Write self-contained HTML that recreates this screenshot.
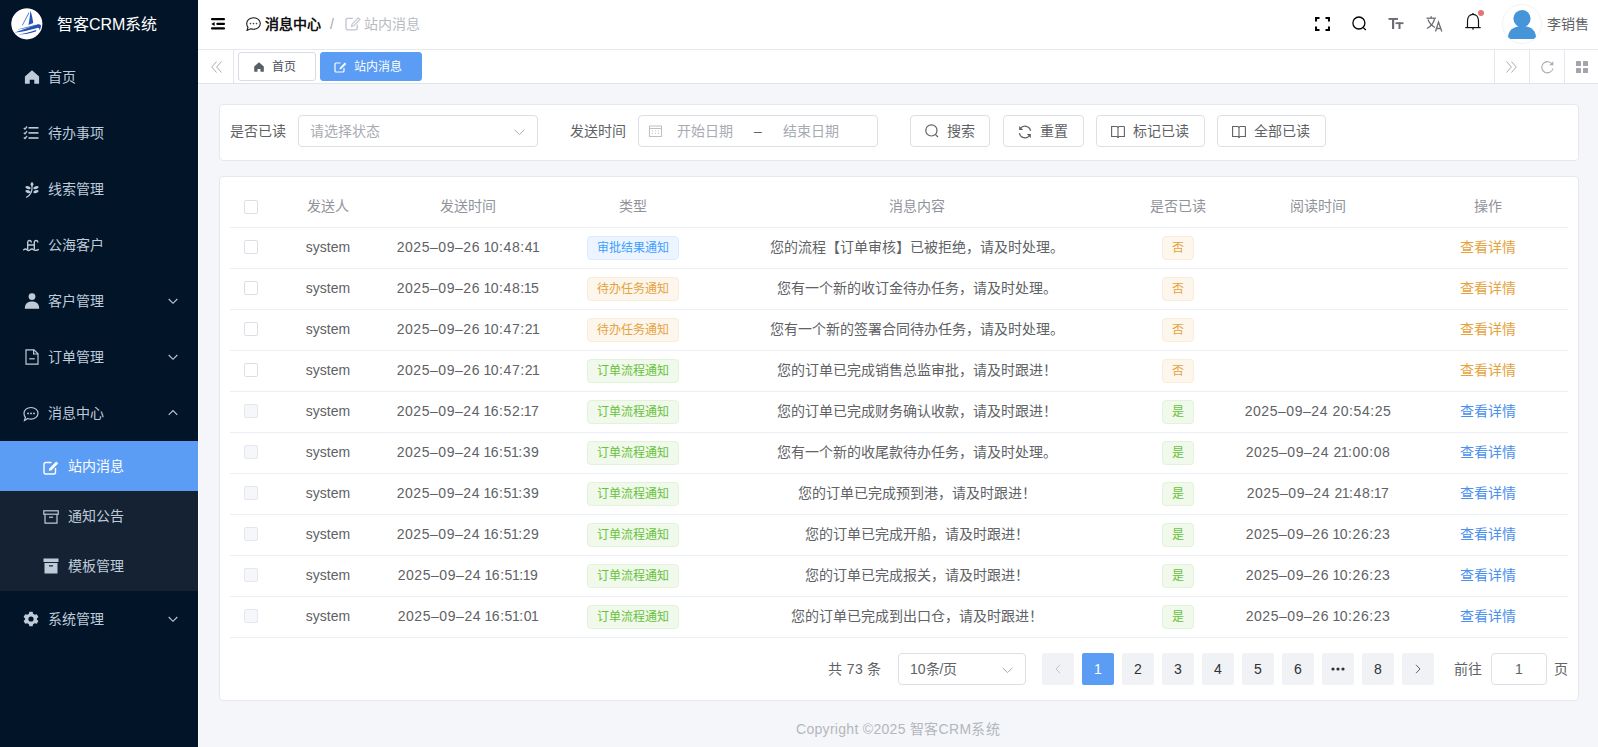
<!DOCTYPE html>
<html lang="zh-CN"><head><meta charset="utf-8">
<style>
*{box-sizing:border-box;margin:0;padding:0}
html,body{width:1598px;height:747px;overflow:hidden}
body{font-family:"Liberation Sans",sans-serif;font-size:14px;color:#606266;background:#f4f6f9;position:relative}
.abs{position:absolute}
svg{display:block}
/* sidebar */
#side{position:absolute;left:0;top:0;width:198px;height:747px;background:#011428}
.logo{position:absolute;left:11px;top:8px;width:32px;height:32px;border-radius:50%;overflow:hidden}
.logotxt{position:absolute;left:57px;top:14px;font-size:16px;font-weight:500;color:#fff;white-space:nowrap;line-height:22px}
.mi{position:absolute;left:0;width:198px;height:56px;color:#bfcbd9;font-size:14px}
.mi .ic{position:absolute;left:23px;top:20px;width:16px;height:16px}
.mi .tx{position:absolute;left:48px;top:0;line-height:56px}
.mi .ar{position:absolute;left:168px;top:24px;width:10px;height:7px}
.sub{position:absolute;left:0;top:441px;width:198px;height:150px;background:#152233}
.si{position:absolute;left:0;width:198px;height:50px;color:#bfcbd9}
.si .ic{position:absolute;left:43px;top:17px;width:16px;height:16px}
.si .tx{position:absolute;left:68px;top:0;line-height:50px}
.si.act{background:#5b9cf4;color:#fff}
/* header */
#hdr{position:absolute;left:198px;top:0;width:1400px;height:50px;background:#fff;border-bottom:1px solid #e6e8ee}
#tags{position:absolute;left:198px;top:50px;width:1400px;height:34px;background:#fff;border-bottom:1px solid #dfe3ea}
.tag{position:absolute;top:2px;height:29px;border:1px solid #d8dce5;border-radius:3px;font-size:12px;line-height:28px;color:#495060;background:#fff}
.tag.act{background:#5b9cf4;border-color:#5b9cf4;color:#fff}
/* cards */
.card{position:absolute;background:#fff;border:1px solid #e5e8ef;border-radius:4px}
.lbl{position:absolute;color:#606266;line-height:32px;font-weight:500}
.inp{position:absolute;height:32px;border:1px solid #dcdfe6;border-radius:4px;background:#fff;color:#a8abb2;line-height:30px}
.btn{position:absolute;top:10px;height:32px;border:1px solid #dcdfe6;border-radius:4px;background:#fff;color:#606266;line-height:30px;font-weight:500}
.btn .ic{position:absolute;left:13px;top:8px;width:14px;height:14px}
.btn .tx{position:absolute;top:0}
/* table */
.row{position:absolute;left:10px;width:1338px;height:41px;border-bottom:1px solid #ebeef5}
.c{position:absolute;top:-1px;text-align:center;white-space:nowrap;line-height:40px}
.hd .c{color:#909399;font-weight:500}
.cb{position:absolute;left:14px;width:14px;height:14px;border:1px solid #dcdfe6;border-radius:2px;background:#fff}
.num{letter-spacing:0.55px}
.n1{font-style:normal;margin-left:-1px;letter-spacing:-0.5px}
.tg{display:inline-block;height:24px;line-height:22px;padding:0 9px;font-size:12px;border:1px solid;border-radius:4px;vertical-align:middle}
.tg.b{background:#ecf5ff;border-color:#d9ecff;color:#409eff}
.tg.o{background:#fdf6ec;border-color:#faecd8;color:#e6a23c}
.tg.g{background:#f0f9eb;border-color:#e1f3d8;color:#67c23a}
.lk{font-weight:500}
.lk.o{color:#e6a23c}
.lk.b{color:#4a90ee}
.pg{position:absolute;top:476px;width:32px;height:32px;border-radius:2px;background:#f0f2f5;color:#303133;text-align:center;line-height:32px;font-weight:500}
.pg.act{background:#5b9cf5;color:#fff}
</style></head><body>

<div id="side">
  <div class="logo"><svg width="32" height="32" viewBox="0 0 32 32"><circle cx="15.8" cy="15.8" r="15.6" fill="#fff"/>
  <path d="M17.6 4.5 L18.3 5 L11.8 17.2 L10.8 17.4 Z" fill="#3a72d4"/>
  <path d="M19.4 2.6 C20.6 6 21.8 11 22.2 15 L17.4 17 C18.6 12 19 7 19.4 2.6Z" fill="#2454b8"/>
  <path d="M3.6 24.4 C10 22.5 18 19.5 26 16.5 C28.5 15.6 30 16.5 30 18 C29.8 19.8 29.2 21.2 28.7 22.4 C28.5 20.5 27.8 19.6 26.2 19.9 C18.5 22 10 24.2 3.6 24.4Z" fill="#2452b4"/>
  <path d="M7 21.2 C13 19.8 19 18.3 25 16.8 L25.2 17.6 C19 19.2 13 20.8 7 21.6Z" fill="#2f63c4"/>
  <path d="M7.2 26.6 C13 25.6 19 24 25 22 C25.5 22.6 25.3 23.2 24.6 23.5 C19 25.3 12.5 26.8 7.2 26.6Z" fill="#2350b0"/></svg></div>
  <div class="logotxt">智客CRM系统</div>

  <div class="mi" style="top:49px"><svg class="ic" style="left:24px;top:20px" width="14" height="14" viewBox="0 0 14 14"><path d="M7 1 L13.2 6.5 V13 H9 V9.5 H5 V13 H0.8 V6.5 Z" fill="#bfcbd9"/></svg><span class="tx">首页</span></div>

  <div class="mi" style="top:105px"><svg class="ic" style="left:23px;top:20px" width="16" height="15" viewBox="0 0 16 15"><g stroke="#bfcbd9" fill="none" stroke-width="1.3"><path d="M0.8 2.5 L2 3.6 L4 1"/><path d="M0.8 7.2 L2 8.3 L4 5.7"/><path d="M0.8 12 L2 13.1 L4 10.5"/></g><g fill="#bfcbd9"><rect x="5.5" y="1.5" width="10" height="1.6"/><rect x="5.5" y="6.6" width="10" height="1.6"/><rect x="5.5" y="11.7" width="10" height="1.6"/></g></svg><span class="tx">待办事项</span></div>

  <div class="mi" style="top:161px"><svg class="ic" style="left:24px;top:21px" width="14" height="15" viewBox="0 0 14 15"><g fill="#bfcbd9"><ellipse cx="7" cy="2.2" rx="1.3" ry="2"/><ellipse cx="3.3" cy="5.3" rx="2.6" ry="1.3" transform="rotate(20 3.3 5.3)"/><ellipse cx="10.7" cy="5.3" rx="2.6" ry="1.3" transform="rotate(-20 10.7 5.3)"/><ellipse cx="3.3" cy="9" rx="2.6" ry="1.3" transform="rotate(20 3.3 9)"/><ellipse cx="10.7" cy="9" rx="2.6" ry="1.3" transform="rotate(-20 10.7 9)"/></g><path d="M7 3.5 C7.5 8 6.5 12 1.5 14.5" stroke="#bfcbd9" stroke-width="1.1" fill="none"/></svg><span class="tx">线索管理</span></div>

  <div class="mi" style="top:217px"><svg class="ic" style="left:23px;top:20px" width="16" height="12" viewBox="0 0 16 12"><g stroke="#bfcbd9" fill="none" stroke-width="1.4" stroke-linecap="round"><path d="M4.7 10 V3.2 C4.7 1 8 1 8.3 3"/><path d="M11.3 10 V3.2 C11.3 1 14.6 1 14.9 3"/><path d="M4.7 6 H11.3"/><path d="M0.7 10.8 C2 9.8 3 9.8 4 10.8 C5 11.8 6 11.8 7.2 10.8 C8.4 9.8 9.4 9.8 10.6 10.8 C11.8 11.8 12.8 11.8 15.3 10.6"/></g></svg><span class="tx">公海客户</span></div>

  <div class="mi" style="top:273px"><svg class="ic" style="left:24px;top:20px" width="15" height="16" viewBox="0 0 15 16"><g fill="#bfcbd9"><circle cx="7.5" cy="3.6" r="3.4"/><path d="M0.3 15.8 C0.3 11 3 8.6 7.5 8.6 C12 8.6 14.7 11 14.7 15.8 Z"/></g></svg><span class="tx">客户管理</span><svg class="ar" style="top:25px" width="10" height="7" viewBox="0 0 10 7"><path d="M0.7 1 L5 5.3 L9.3 1" stroke="#bfcbd9" stroke-width="1.1" fill="none"/></svg></div>

  <div class="mi" style="top:329px"><svg class="ic" style="left:24px;top:20px" width="14" height="16" viewBox="0 0 14 16"><g stroke="#bfcbd9" fill="none" stroke-width="1.2"><path d="M1 0.8 H9 L13 4.8 V15.2 H1 Z"/><path d="M8.6 0.8 V5 H13"/><path d="M4.2 9.8 H9.8"/></g></svg><span class="tx">订单管理</span><svg class="ar" style="top:25px" width="10" height="7" viewBox="0 0 10 7"><path d="M0.7 1 L5 5.3 L9.3 1" stroke="#bfcbd9" stroke-width="1.1" fill="none"/></svg></div>

  <div class="mi" style="top:385px"><svg class="ic" style="left:23px;top:21px" width="16" height="15" viewBox="0 0 16 15"><path d="M8 1 C12 1 15 3.5 15 6.8 C15 10 12 12.6 8 12.6 C6.8 12.6 5.8 12.4 4.8 12 L1.5 14 L2.4 10.8 C1.5 9.7 1 8.3 1 6.8 C1 3.5 4 1 8 1Z" stroke="#bfcbd9" stroke-width="1.2" fill="none"/><g fill="#bfcbd9"><circle cx="5" cy="6.9" r="0.95"/><circle cx="8" cy="6.9" r="0.95"/><circle cx="11" cy="6.9" r="0.95"/></g></svg><span class="tx">消息中心</span><svg class="ar" style="top:24px" width="10" height="7" viewBox="0 0 10 7"><path d="M0.7 5.8 L5 1.5 L9.3 5.8" stroke="#bfcbd9" stroke-width="1.1" fill="none"/></svg></div>

  <div class="sub">
    <div class="si act" style="top:0"><svg class="ic" style="left:43px;top:19px" width="16" height="14" viewBox="0 0 16 14"><path d="M8.5 1.5 H2.5 C1.6 1.5 1 2.1 1 3 V11.5 C1 12.4 1.6 13 2.5 13 H11 C11.9 13 12.5 12.4 12.5 11.5 V7" stroke="#fff" stroke-width="1.4" fill="none"/><path d="M13.2 0.6 L15.2 2.6 L8.5 9.3 L5.8 10 L6.5 7.3 Z" fill="#fff"/></svg><span class="tx">站内消息</span></div>
    <div class="si" style="top:50px"><svg class="ic" style="left:43px;top:18px" width="16" height="14" viewBox="0 0 16 14"><g stroke="#bfcbd9" fill="none" stroke-width="1.2"><rect x="0.8" y="0.8" width="14.4" height="3.4"/><path d="M2 4.2 V13.2 H14 V4.2"/><path d="M6 7.2 H10"/></g></svg><span class="tx">通知公告</span></div>
    <div class="si" style="top:100px"><svg class="ic" style="left:43px;top:17px" width="16" height="16" viewBox="0 0 16 16"><g fill="#bfcbd9"><rect x="0.5" y="0.5" width="15" height="3.5"/><path d="M1.5 5 H14.5 V15.5 H1.5 Z M6 7.3 V8.5 H10 V7.3 Z" fill-rule="evenodd"/></g></svg><span class="tx">模板管理</span></div>
  </div>

  <div class="mi" style="top:591px"><svg class="ic" style="left:23px;top:20px" width="16" height="15" viewBox="0 0 16 15"><path fill="#bfcbd9" fill-rule="evenodd" d="M6.4 0.3 H9.6 L10.1 2.3 L11.8 3.3 L13.8 2.7 L15.4 5.4 L13.9 6.9 V8.1 L15.4 9.6 L13.8 12.3 L11.8 11.7 L10.1 12.7 L9.6 14.7 H6.4 L5.9 12.7 L4.2 11.7 L2.2 12.3 L0.6 9.6 L2.1 8.1 V6.9 L0.6 5.4 L2.2 2.7 L4.2 3.3 L5.9 2.3 Z M8 4.9 A2.6 2.6 0 1 0 8 10.1 A2.6 2.6 0 1 0 8 4.9Z"/></svg><span class="tx">系统管理</span><svg class="ar" style="top:25px" width="10" height="7" viewBox="0 0 10 7"><path d="M0.7 1 L5 5.3 L9.3 1" stroke="#bfcbd9" stroke-width="1.1" fill="none"/></svg></div>
</div>

<div class="abs" style="left:198px;top:84px;width:1px;height:663px;background:#fbfbfc"></div>
<div id="hdr">
  <svg class="abs" style="left:13px;top:17px" width="14" height="13" viewBox="0 0 14 13"><g fill="#000"><rect x="0" y="1" width="14" height="2.2" rx="1"/><rect x="5.3" y="5.8" width="8.7" height="2.2" rx="1"/><rect x="0" y="10.3" width="14" height="2.2" rx="1"/><path d="M0.3 6.9 L3.6 4.9 V8.9 Z"/></g></svg>
  <svg class="abs" style="left:48px;top:17px" width="15" height="14" viewBox="0 0 15 14"><path d="M7.5 0.7 C11.3 0.7 14.3 3.3 14.3 6.5 C14.3 9.7 11.3 12.3 7.5 12.3 C6.5 12.3 5.5 12.1 4.6 11.8 L1 13.4 L2 10.4 C1.1 9.3 0.7 8 0.7 6.5 C0.7 3.3 3.7 0.7 7.5 0.7Z" stroke="#1a1a1a" stroke-width="1.1" fill="none"/><g fill="#444"><circle cx="4.5" cy="6.6" r="0.8"/><circle cx="7.5" cy="6.6" r="0.8"/><circle cx="10.5" cy="6.6" r="0.8"/></g></svg>
  <span class="abs" style="left:67px;top:13px;line-height:22px;font-weight:bold;color:#111">消息中心</span>
  <span class="abs" style="left:132px;top:13px;line-height:22px;color:#a3a6ad">/</span>
  <svg class="abs" style="left:147px;top:17px" width="16" height="14" viewBox="0 0 16 14"><path d="M8 1.3 H2.6 C1.7 1.3 1 2 1 2.9 V11.2 C1 12.1 1.7 12.8 2.6 12.8 H10.6 C11.5 12.8 12.2 12.1 12.2 11.2 V7.5" stroke="#c0c4cc" stroke-width="1.3" fill="none"/><path d="M13.3 0.8 L15 2.5 L8.7 8.8 L6.5 9.5 L7.1 7.2 Z" stroke="#c0c4cc" stroke-width="1.1" fill="none"/></svg>
  <span class="abs" style="left:166px;top:13px;line-height:22px;color:#b8bbc2">站内消息</span>

  <svg class="abs" style="left:1117px;top:17px" width="15" height="14" viewBox="0 0 15 14"><g stroke="#000" stroke-width="2.1" fill="none"><path d="M1 4.5 V1 H4.5"/><path d="M10.5 1 H14 V4.5"/><path d="M14 9.5 V13 H10.5"/><path d="M4.5 13 H1 V9.5"/></g></svg>
  <svg class="abs" style="left:1154px;top:16px" width="15" height="15" viewBox="0 0 15 15"><circle cx="6.9" cy="7" r="6" stroke="#000" stroke-width="1.3" fill="none"/><path d="M11.3 11.6 L13.8 14" stroke="#000" stroke-width="1.3"/></svg>
  <svg class="abs" style="left:1190px;top:18px" width="16" height="12" viewBox="0 0 16 12"><g fill="#6b6d72"><rect x="0.5" y="0" width="9.5" height="1.9"/><rect x="4" y="0" width="2.2" height="11"/><rect x="7.5" y="4.3" width="8" height="1.8"/><rect x="10.5" y="4.3" width="2" height="6.7"/></g></svg>
  <svg class="abs" style="left:1228px;top:16px" width="17" height="16" viewBox="0 0 17 16"><g stroke="#6b6d72" stroke-width="1.3" fill="none"><path d="M0.5 2.2 H10"/><path d="M5.2 0.2 V2.2"/><path d="M2 3.5 C3.5 7.5 6 10 9 11.5"/><path d="M8.5 3 C7.5 7 5 10.5 1 12.5"/><path d="M9.5 15.5 L12.5 6 L15.8 15.5 M10.6 12.5 H14.6"/></g></svg>
  <svg class="abs" style="left:1267px;top:9px" width="20" height="22" viewBox="0 0 20 22"><g stroke="#111" stroke-width="1.2" fill="none"><path d="M2.5 18.5 V12 C2.5 8 4.8 5.3 8 5.3 C11.2 5.3 13.5 8 13.5 12 V18.5"/><path d="M0.3 18.6 H15.7"/><path d="M8 4 V5.5 M8 18.8 V20.8"/></g><circle cx="16" cy="4" r="3" fill="#e57373"/></svg>
  <div class="abs" style="left:1304px;top:4px;width:40px;height:40px;border-radius:50%;border:1px solid #f2f3f5;overflow:hidden"><svg width="40" height="40" viewBox="0 0 40 40"><g fill="#4595d8"><circle cx="19" cy="13.6" r="8.6"/><path d="M5 32.5 C5 26 10 21 19 21 C28 21 33 26 33 32.5 V33 C33 33.6 32.5 34 32 34 H6 C5.5 34 5 33.6 5 33Z"/></g></svg></div>
  <span class="abs" style="left:1349px;top:13px;line-height:22px;color:#606266">李销售</span>
</div>
<div id="tags">
  <svg class="abs" style="left:13px;top:11px" width="11" height="12" viewBox="0 0 11 12"><path d="M5.5 0.5 L0.7 6 L5.5 11.5 M10.5 0.5 L5.7 6 L10.5 11.5" stroke="#a8abb2" stroke-width="1" fill="none"/></svg>
  <div class="abs" style="left:35px;top:0;width:1px;height:33px;background:#e4e7ed"></div>
  <div class="tag" style="left:40px;width:78px"><svg class="abs" style="left:15px;top:9px" width="10" height="10" viewBox="0 0 10 10"><path d="M5 0.3 L9.8 4.6 V9.8 H6.5 V7 H3.5 V9.8 H0.2 V4.6Z" fill="#5a5e66"/></svg><span class="abs" style="left:33px;top:0">首页</span></div>
  <div class="tag act" style="left:122px;width:102px"><svg class="abs" style="left:13px;top:9px" width="13" height="11" viewBox="0 0 13 11"><path d="M6.5 1 H2 C1.4 1 1 1.4 1 2 V9 C1 9.6 1.4 10 2 10 H9 C9.6 10 10 9.6 10 9 V6" stroke="#fff" stroke-width="1.2" fill="none"/><path d="M10.8 0.5 L12.3 2 L7.2 7.1 L5.4 7.6 L5.9 5.8Z" fill="#fff"/></svg><span class="abs" style="left:33px;top:0">站内消息</span></div>
  <div class="abs" style="left:1296px;top:0;width:1px;height:33px;background:#e4e7ed"></div>
  <div class="abs" style="left:1331px;top:0;width:1px;height:33px;background:#e4e7ed"></div>
  <div class="abs" style="left:1366px;top:0;width:1px;height:33px;background:#e4e7ed"></div>
  <svg class="abs" style="left:1308px;top:11px" width="11" height="12" viewBox="0 0 11 12"><path d="M0.5 0.5 L5.3 6 L0.5 11.5 M5.5 0.5 L10.3 6 L5.5 11.5" stroke="#a8abb2" stroke-width="1" fill="none"/></svg>
  <svg class="abs" style="left:1343px;top:10px" width="13" height="14" viewBox="0 0 13 14"><path d="M11.3 4.5 A5.6 5.6 0 1 0 11.9 8.5" stroke="#a8abb2" stroke-width="1.1" fill="none"/><path d="M12.3 1.2 V5.3 H8.3Z" fill="#a8abb2"/></svg>
  <svg class="abs" style="left:1378px;top:11px" width="12" height="12" viewBox="0 0 12 12"><g fill="#a2a5ad"><rect x="0" y="0" width="5" height="5" rx="0.6"/><rect x="7" y="0" width="5" height="5" rx="0.6"/><rect x="0" y="7" width="5" height="5" rx="0.6"/><rect x="7" y="7" width="5" height="5" rx="0.6"/></g></svg>
</div>

<div class="card" style="left:219px;top:104px;width:1360px;height:57px">
  <span class="lbl" style="left:10px;top:10px">是否已读</span>
  <div class="inp" style="left:78px;top:10px;width:240px"><span class="abs" style="left:11px;top:0">请选择状态</span><svg class="abs" style="left:215px;top:13px" width="11" height="7" viewBox="0 0 11 7"><path d="M0.6 0.8 L5.5 5.6 L10.4 0.8" stroke="#a8abb2" stroke-width="1" fill="none"/></svg></div>
  <span class="lbl" style="left:350px;top:10px">发送时间</span>
  <div class="inp" style="left:418px;top:10px;width:240px"><svg class="abs" style="left:10px;top:9px" width="13" height="12" viewBox="0 0 13 12"><g stroke="#b6b9c0" stroke-width="0.9" fill="none"><rect x="0.5" y="1" width="12" height="10.5"/><path d="M0.5 3.5 H12.5"/></g><g fill="#c0c4cc"><rect x="3" y="5.5" width="1" height="1"/><rect x="6" y="5.5" width="1" height="1"/><rect x="9" y="5.5" width="1" height="1"/><rect x="3" y="8" width="1" height="1"/><rect x="6" y="8" width="1" height="1"/><rect x="9" y="8" width="1" height="1"/></g></svg><span class="abs" style="left:38px;top:0">开始日期</span><span class="abs" style="left:115px;top:0;color:#606266">–</span><span class="abs" style="left:144px;top:0">结束日期</span></div>
  <div class="btn" style="left:690px;width:80px"><svg class="ic" style="left:14px;top:8px" width="14" height="14" viewBox="0 0 14 14"><circle cx="6.4" cy="6.4" r="5.6" stroke="#606266" stroke-width="1.2" fill="none"/><path d="M10.5 10.6 L13 13" stroke="#606266" stroke-width="1.2"/></svg><span class="tx" style="left:36px">搜索</span></div>
  <div class="btn" style="left:783px;width:81px"><svg class="ic" style="left:14px;top:9px" width="12" height="12" viewBox="0 0 12 12"><g stroke="#606266" stroke-width="1.1" fill="none"><path d="M10.8 5 A4.9 4.9 0 0 0 2 3"/><path d="M1.2 7 A4.9 4.9 0 0 0 10 9"/></g><path d="M1 0.8 V4.3 H4.5Z M11 11.2 V7.7 H7.5Z" fill="#606266"/></svg><span class="tx" style="left:36px">重置</span></div>
  <div class="btn" style="left:876px;width:109px"><svg class="ic" style="left:14px;top:9px" width="14" height="13" viewBox="0 0 14 13"><g stroke="#606266" stroke-width="1.1" fill="none"><path d="M0.6 1 H5.5 C6.3 1 7 1.6 7 2.4 V12.4 C7 11.6 6.3 11 5.5 11 H0.6 Z"/><path d="M13.4 1 H8.5 C7.7 1 7 1.6 7 2.4 M7 12.4 C7 11.6 7.7 11 8.5 11 H13.4 V1"/></g></svg><span class="tx" style="left:36px">标记已读</span></div>
  <div class="btn" style="left:997px;width:109px"><svg class="ic" style="left:14px;top:9px" width="14" height="13" viewBox="0 0 14 13"><g stroke="#606266" stroke-width="1.1" fill="none"><path d="M0.6 1 H5.5 C6.3 1 7 1.6 7 2.4 V12.4 C7 11.6 6.3 11 5.5 11 H0.6 Z"/><path d="M13.4 1 H8.5 C7.7 1 7 1.6 7 2.4 M7 12.4 C7 11.6 7.7 11 8.5 11 H13.4 V1"/></g></svg><span class="tx" style="left:36px">全部已读</span></div>
</div>
<div class="card" style="left:219px;top:176px;width:1360px;height:525px">
<div class="row hd" style="top:0;height:51px"><div class="cb" style="top:23px"></div><div class="c" style="left:-102px;width:400px;top:9px">发送人</div><div class="c" style="left:38px;width:400px;top:9px">发送时间</div><div class="c" style="left:203px;width:400px;top:9px">类型</div><div class="c" style="left:487px;width:400px;top:9px">消息内容</div><div class="c" style="left:748px;width:400px;top:9px">是否已读</div><div class="c" style="left:888px;width:400px;top:9px">阅读时间</div><div class="c" style="left:1058px;width:400px;top:9px">操作</div></div>
<div class="row" style="top:51px"><div class="cb" style="top:12px"></div><div class="c " style="left:-102px;width:400px">system</div><div class="c num" style="left:38px;width:400px">2025–09–26 <i class="n1">1</i>0:48:4<i class="n1">1</i></div><div class="c " style="left:203px;width:400px"><span class="tg b">审批结果通知</span></div><div class="c " style="left:487px;width:400px">您的流程【订单审核】已被拒绝，请及时处理。</div><div class="c " style="left:748px;width:400px"><span class="tg o yn">否</span></div><div class="c lk o" style="left:1058px;width:400px">查看详情</div></div>
<div class="row" style="top:92px"><div class="cb" style="top:12px"></div><div class="c " style="left:-102px;width:400px">system</div><div class="c num" style="left:38px;width:400px">2025–09–26 <i class="n1">1</i>0:48:<i class="n1">1</i>5</div><div class="c " style="left:203px;width:400px"><span class="tg o">待办任务通知</span></div><div class="c " style="left:487px;width:400px">您有一个新的收订金待办任务，请及时处理。</div><div class="c " style="left:748px;width:400px"><span class="tg o yn">否</span></div><div class="c lk o" style="left:1058px;width:400px">查看详情</div></div>
<div class="row" style="top:133px"><div class="cb" style="top:12px"></div><div class="c " style="left:-102px;width:400px">system</div><div class="c num" style="left:38px;width:400px">2025–09–26 <i class="n1">1</i>0:47:2<i class="n1">1</i></div><div class="c " style="left:203px;width:400px"><span class="tg o">待办任务通知</span></div><div class="c " style="left:487px;width:400px">您有一个新的签署合同待办任务，请及时处理。</div><div class="c " style="left:748px;width:400px"><span class="tg o yn">否</span></div><div class="c lk o" style="left:1058px;width:400px">查看详情</div></div>
<div class="row" style="top:174px"><div class="cb" style="top:12px"></div><div class="c " style="left:-102px;width:400px">system</div><div class="c num" style="left:38px;width:400px">2025–09–26 <i class="n1">1</i>0:47:2<i class="n1">1</i></div><div class="c " style="left:203px;width:400px"><span class="tg g">订单流程通知</span></div><div class="c " style="left:487px;width:400px">您的订单已完成销售总监审批，请及时跟进！</div><div class="c " style="left:748px;width:400px"><span class="tg o yn">否</span></div><div class="c lk o" style="left:1058px;width:400px">查看详情</div></div>
<div class="row" style="top:215px"><div class="cb" style="top:12px;background:#f5f7fa;border-color:#e4e7ed"></div><div class="c " style="left:-102px;width:400px">system</div><div class="c num" style="left:38px;width:400px">2025–09–24 <i class="n1">1</i>6:52:<i class="n1">1</i>7</div><div class="c " style="left:203px;width:400px"><span class="tg g">订单流程通知</span></div><div class="c " style="left:487px;width:400px">您的订单已完成财务确认收款，请及时跟进！</div><div class="c " style="left:748px;width:400px"><span class="tg g yn">是</span></div><div class="c num" style="left:888px;width:400px">2025–09–24 20:54:25</div><div class="c lk b" style="left:1058px;width:400px">查看详情</div></div>
<div class="row" style="top:256px"><div class="cb" style="top:12px;background:#f5f7fa;border-color:#e4e7ed"></div><div class="c " style="left:-102px;width:400px">system</div><div class="c num" style="left:38px;width:400px">2025–09–24 <i class="n1">1</i>6:5<i class="n1">1</i>:39</div><div class="c " style="left:203px;width:400px"><span class="tg g">订单流程通知</span></div><div class="c " style="left:487px;width:400px">您有一个新的收尾款待办任务，请及时处理。</div><div class="c " style="left:748px;width:400px"><span class="tg g yn">是</span></div><div class="c num" style="left:888px;width:400px">2025–09–24 2<i class="n1">1</i>:00:08</div><div class="c lk b" style="left:1058px;width:400px">查看详情</div></div>
<div class="row" style="top:297px"><div class="cb" style="top:12px;background:#f5f7fa;border-color:#e4e7ed"></div><div class="c " style="left:-102px;width:400px">system</div><div class="c num" style="left:38px;width:400px">2025–09–24 <i class="n1">1</i>6:5<i class="n1">1</i>:39</div><div class="c " style="left:203px;width:400px"><span class="tg g">订单流程通知</span></div><div class="c " style="left:487px;width:400px">您的订单已完成预到港，请及时跟进！</div><div class="c " style="left:748px;width:400px"><span class="tg g yn">是</span></div><div class="c num" style="left:888px;width:400px">2025–09–24 2<i class="n1">1</i>:48:<i class="n1">1</i>7</div><div class="c lk b" style="left:1058px;width:400px">查看详情</div></div>
<div class="row" style="top:338px"><div class="cb" style="top:12px;background:#f5f7fa;border-color:#e4e7ed"></div><div class="c " style="left:-102px;width:400px">system</div><div class="c num" style="left:38px;width:400px">2025–09–24 <i class="n1">1</i>6:5<i class="n1">1</i>:29</div><div class="c " style="left:203px;width:400px"><span class="tg g">订单流程通知</span></div><div class="c " style="left:487px;width:400px">您的订单已完成开船，请及时跟进！</div><div class="c " style="left:748px;width:400px"><span class="tg g yn">是</span></div><div class="c num" style="left:888px;width:400px">2025–09–26 <i class="n1">1</i>0:26:23</div><div class="c lk b" style="left:1058px;width:400px">查看详情</div></div>
<div class="row" style="top:379px"><div class="cb" style="top:12px;background:#f5f7fa;border-color:#e4e7ed"></div><div class="c " style="left:-102px;width:400px">system</div><div class="c num" style="left:38px;width:400px">2025–09–24 <i class="n1">1</i>6:5<i class="n1">1</i>:<i class="n1">1</i>9</div><div class="c " style="left:203px;width:400px"><span class="tg g">订单流程通知</span></div><div class="c " style="left:487px;width:400px">您的订单已完成报关，请及时跟进！</div><div class="c " style="left:748px;width:400px"><span class="tg g yn">是</span></div><div class="c num" style="left:888px;width:400px">2025–09–26 <i class="n1">1</i>0:26:23</div><div class="c lk b" style="left:1058px;width:400px">查看详情</div></div>
<div class="row" style="top:420px"><div class="cb" style="top:12px;background:#f5f7fa;border-color:#e4e7ed"></div><div class="c " style="left:-102px;width:400px">system</div><div class="c num" style="left:38px;width:400px">2025–09–24 <i class="n1">1</i>6:5<i class="n1">1</i>:0<i class="n1">1</i></div><div class="c " style="left:203px;width:400px"><span class="tg g">订单流程通知</span></div><div class="c " style="left:487px;width:400px">您的订单已完成到出口仓，请及时跟进！</div><div class="c " style="left:748px;width:400px"><span class="tg g yn">是</span></div><div class="c num" style="left:888px;width:400px">2025–09–26 <i class="n1">1</i>0:26:23</div><div class="c lk b" style="left:1058px;width:400px">查看详情</div></div>
<div class="pgw">
<span class="abs" style="left:608px;top:476px;line-height:32px;letter-spacing:0.4px">共 73 条</span>
<div class="inp" style="left:678px;top:476px;width:128px;color:#606266"><span class="abs" style="left:11px;top:0">10条/页</span><svg class="abs" style="left:103px;top:13px" width="11" height="7" viewBox="0 0 11 7"><path d="M0.6 0.8 L5.5 5.6 L10.4 0.8" stroke="#a8abb2" stroke-width="1" fill="none"/></svg></div>
<div class="pg" style="left:822px"><svg class="abs" style="left:13px;top:11px" width="6" height="10" viewBox="0 0 6 10"><path d="M5 0.8 L1 5 L5 9.2" stroke="#c0c4cc" stroke-width="1" fill="none"/></svg></div>
<div class="pg act" style="left:862px">1</div><div class="pg" style="left:902px">2</div><div class="pg" style="left:942px">3</div><div class="pg" style="left:982px">4</div><div class="pg" style="left:1022px">5</div><div class="pg" style="left:1062px">6</div>
<div class="pg" style="left:1102px"><svg class="abs" style="left:9px;top:14px" width="14" height="4" viewBox="0 0 14 4"><g fill="#303133"><circle cx="2" cy="2" r="1.6"/><circle cx="7" cy="2" r="1.6"/><circle cx="12" cy="2" r="1.6"/></g></svg></div>
<div class="pg" style="left:1142px">8</div>
<div class="pg" style="left:1182px"><svg class="abs" style="left:13px;top:11px" width="6" height="10" viewBox="0 0 6 10"><path d="M1 0.8 L5 5 L1 9.2" stroke="#606266" stroke-width="1" fill="none"/></svg></div>
<span class="abs" style="left:1234px;top:476px;line-height:32px">前往</span>
<div class="inp" style="left:1271px;top:476px;width:56px;color:#606266;text-align:center">1</div>
<span class="abs" style="left:1334px;top:476px;line-height:32px">页</span>
</div>
</div>

<div class="abs" style="left:0;top:718px;width:1598px;text-align:center;padding-left:198px;color:#b4b7bd;line-height:22px;letter-spacing:0.3px">Copyright ©2025 智客CRM系统</div>
</body></html>
